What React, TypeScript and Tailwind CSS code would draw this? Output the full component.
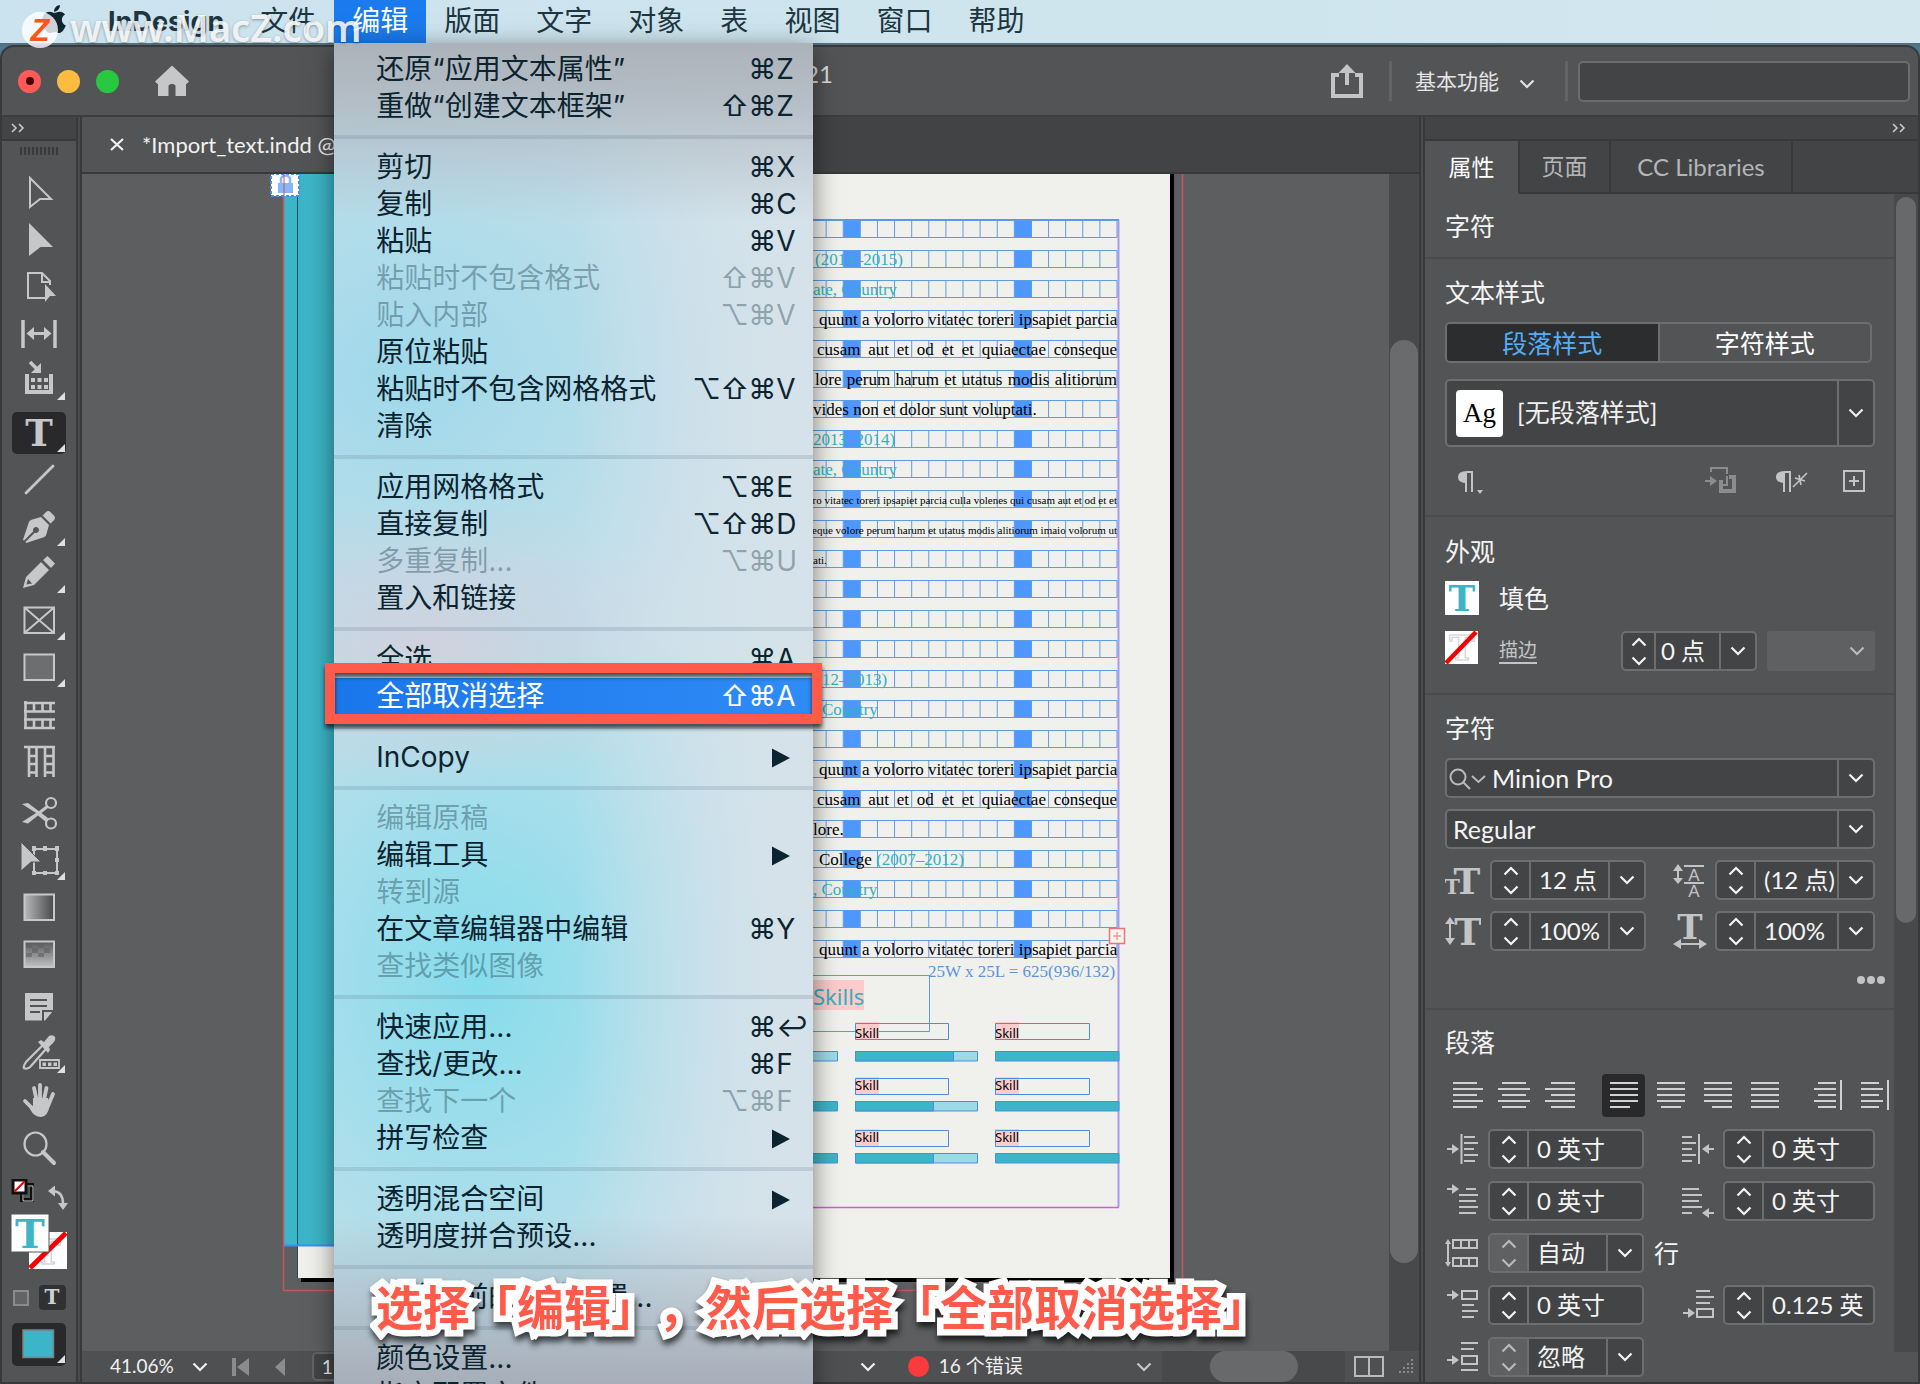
import type { ReactNode } from "react"
import { FaApple, FaPenNib } from "react-icons/fa"

type MenuEntry = {
  label: string
  keys?: string
  sub?: boolean
  disabled?: boolean
  active?: boolean
}

const menuGroups: MenuEntry[][] = [
  [
    { label: "还原“应用文本属性”", keys: "⌘Z" },
    { label: "重做“创建文本框架”", keys: "⇧⌘Z" },
  ],
  [
    { label: "剪切", keys: "⌘X" },
    { label: "复制", keys: "⌘C" },
    { label: "粘贴", keys: "⌘V" },
    { label: "粘贴时不包含格式", keys: "⇧⌘V", disabled: true },
    { label: "贴入内部", keys: "⌥⌘V", disabled: true },
    { label: "原位粘贴" },
    { label: "粘贴时不包含网格格式", keys: "⌥⇧⌘V" },
    { label: "清除" },
  ],
  [
    { label: "应用网格格式", keys: "⌥⌘E" },
    { label: "直接复制", keys: "⌥⇧⌘D" },
    { label: "多重复制...", keys: "⌥⌘U", disabled: true },
    { label: "置入和链接" },
  ],
  [
    { label: "全选", keys: "⌘A" },
    { label: "全部取消选择", keys: "⇧⌘A", active: true },
  ],
  [{ label: "InCopy", sub: true }],
  [
    { label: "编辑原稿", disabled: true },
    { label: "编辑工具", sub: true },
    { label: "转到源", disabled: true },
    { label: "在文章编辑器中编辑", keys: "⌘Y" },
    { label: "查找类似图像", disabled: true },
  ],
  [
    { label: "快速应用...", keys: "⌘↩" },
    { label: "查找/更改...", keys: "⌘F" },
    { label: "查找下一个", keys: "⌥⌘F", disabled: true },
    { label: "拼写检查", sub: true },
  ],
  [{ label: "透明混合空间", sub: true }, { label: "透明度拼合预设..." }],
  [{ label: "迁移以前的本地设置..." }],
  [{ label: "颜色设置..." }, { label: "指定配置文件..." }],
]

function MenuItem({ entry }: { entry: MenuEntry }) {
  const tone = entry.active
    ? "bg-linear-to-r from-[#1a77ea] to-[#2f8bf6] text-white"
    : entry.disabled
      ? "text-[#0b2b38]/35"
      : "text-[#0c2430]"
  return (
    <button
      disabled={entry.disabled}
      className={`relative flex h-[37px] w-full items-center justify-between pr-[16px] pl-[42px] text-left text-[28px] leading-[37px] whitespace-nowrap ${tone}`}
    >
      <span>{entry.label}</span>
      {entry.keys && (
        <span className="flex">
          {[...entry.keys].map((k, i) => (
            <span key={i} className={i === entry.keys!.length - 1 ? "w-[21px]" : "w-[28px]"}>
              {k}
            </span>
          ))}
        </span>
      )}
      {entry.sub && (
        <svg className="mr-[7px] h-[20px] w-[18px]" viewBox="0 0 18 20" fill="currentColor">
          <path d="M0 0.500L18 10L0 19.500Z" />
        </svg>
      )}
      {entry.active && (
        <span className="absolute -inset-x-[9px] -top-[15px] -bottom-[9px] z-10 border-[10px] border-[#ff5a4a] drop-shadow-[0_4px_2px_rgba(0,0,0,0.65)]" />
      )}
    </button>
  )
}

function EditMenu() {
  return (
    <div className="absolute top-full left-0 z-20 w-[479px] bg-[#c9e0ea] bg-[linear-gradient(180deg,rgba(172,178,186,1)_0%,rgba(175,183,191,0.85)_4%,rgba(180,200,212,0)_13%,rgba(180,200,212,0)_85%,rgba(166,173,184,0.9)_96%,rgba(160,166,178,1)_100%),linear-gradient(90deg,rgba(214,226,234,0)_50%,rgba(214,226,234,1)_95%),radial-gradient(ellipse_260px_150px_at_20%_44%,rgba(208,210,222,1),rgba(208,210,222,0)),radial-gradient(ellipse_340px_420px_at_30%_68%,#86dcec,rgba(150,222,236,0)),radial-gradient(ellipse_380px_330px_at_15%_24%,#9fd9ea,rgba(165,220,235,0))] py-[8px] shadow-[0_6px_24px_rgba(0,0,0,0.5)]">
      {menuGroups.map((group, i) => (
        <div key={i}>
          {i > 0 && <hr className="my-[10px] h-[4px] border-0 bg-[#5b7485]/20" />}
          {group.map((entry) => (
            <MenuItem key={entry.label} entry={entry} />
          ))}
        </div>
      ))}
    </div>
  )
}

function MenuBar() {
  return (
    <nav className="relative z-20 flex h-[45px] shrink-0 items-stretch border-b-2 border-[#55717f] bg-linear-to-r from-[#cbe3ee] to-[#d2e7ee] pl-[40px] text-[28px] leading-[43px] text-[#1d3640]">
      <button aria-label="Apple" className="mr-[40px] pb-[6px]">
        <FaApple className="h-[32px] w-[28px] text-[#10262f]" />
      </button>
      <button className="pr-[18px] text-[27px] font-bold">InDesign</button>
      <button className="px-[18px]">文件</button>
      <div className="relative">
        <button className="bg-[#1b7bee] px-[18px] text-white">编辑</button>
        <EditMenu />
      </div>
      {["版面", "文字", "对象", "表", "视图", "窗口", "帮助"].map((label) => (
        <button key={label} className="px-[18px]">
          {label}
        </button>
      ))}
    </nav>
  )
}

function Watermark() {
  return (
    <div className="pointer-events-none absolute top-[3px] left-[22px] z-30 flex items-center gap-[12px]">
      <svg className="mt-[6px] h-[36px] w-[36px]" viewBox="0 0 36 36">
        <circle cx="18" cy="18" r="18" fill="#ffffff" fillOpacity="0.8" />
        <text x="18" y="29" textAnchor="middle" fontSize="31" fontWeight="bold" fontStyle="italic" fontFamily="Liberation Sans" fill="#ff5416">
          Z
        </text>
      </svg>
      <span className="font-['Noto_Sans'] text-[38px] leading-[48px] font-semibold text-white/85 [text-shadow:0_1px_3px_rgba(0,0,0,0.35)]">
        www.MacZ.com
      </span>
    </div>
  )
}

function Chevron({ className = "" }: { className?: string }) {
  return (
    <svg className={`h-[10px] w-[16px] ${className}`} viewBox="0 0 16 10" fill="none" stroke="currentColor" strokeWidth="2.200">
      <path d="M1.500 1.500L8 8L14.500 1.500" />
    </svg>
  )
}

function DoubleChevron() {
  return (
    <svg className="h-[10px] w-[14px]" viewBox="0 0 14 10" fill="none" stroke="#c8c9ca" strokeWidth="1.600">
      <path d="M1 1L5 5L1 9M8 1L12 5L8 9" />
    </svg>
  )
}

function TitleBar() {
  return (
    <header className="flex h-[70px] shrink-0 items-center border-b-2 border-[#3c3d3f] pr-[8px] pl-[16px]">
      <div className="flex gap-[16px]">
        <button aria-label="关闭" className="flex h-[23px] w-[23px] items-center justify-center rounded-full bg-[#fc5b57]">
          <span className="h-[8px] w-[8px] rounded-full bg-[#4d0000]" />
        </button>
        <button aria-label="最小化" className="h-[23px] w-[23px] rounded-full bg-[#fdbc40]" />
        <button aria-label="缩放" className="h-[23px] w-[23px] rounded-full bg-[#28c840]" />
      </div>
      <button aria-label="主页" className="ml-[36px]">
        <svg className="h-[32px] w-[34px]" viewBox="0 0 34 32" fill="#c6c7c9">
          <path d="M17 0.500L34 16.500L31.500 19H31V31H20.500V20.500Q17 17 13.500 20.500V31H3V19H2.500L0 16.500Z" />
        </svg>
      </button>
      <span className="ml-[616px] pb-[14px] text-[24px] leading-[30px] text-[#dcdcdc]">21</span>
      <button aria-label="共享" className="ml-auto">
        <svg className="h-[36px] w-[34px]" viewBox="0 0 34 36" fill="none" stroke="#c3c4c6" strokeWidth="4">
          <path d="M9 12H3V33H31V12H25" />
          <path d="M17 22V8" />
          <path d="M8.500 10L17 1L25.500 10Z" fill="#c3c4c6" stroke="none" />
        </svg>
      </button>
      <span className="ml-[25px] h-[40px] w-[3px] bg-[#636466]" />
      <button className="flex items-center gap-[20px] pl-[23px] text-[21px] text-[#e4e4e4]">
        基本功能
        <Chevron className="mt-[6px]" />
      </button>
      <span className="ml-[30px] h-[40px] w-[3px] bg-[#636466]" />
      <input
        aria-label="搜索"
        className="ml-[10px] h-[41px] w-[332px] rounded-[5px] border-2 border-[#6b6c6e] bg-[#434446] px-2"
      />
    </header>
  )
}

const slabT = { fontFamily: "DejaVu Serif", fontWeight: "bold" } as const

type Tool = { name: string; icon: ReactNode; more?: boolean; active?: boolean }

const toolGroups: Tool[][] = [
  [
    { name: "选择", icon: <path d="M18 6L39 27H28L18 35Z" fill="none" strokeWidth="2" /> },
    { name: "直接选择", icon: <path d="M17 4L41 28H28.500L17 37Z" stroke="none" /> },
    {
      name: "页面",
      icon: (
        <>
          <path d="M33 32H16V7H30L38 15V19M30 7V16H38" fill="none" strokeWidth="2" />
          <path d="M33 18L44 30H38L33 36Z" stroke="none" />
        </>
      ),
    },
    {
      name: "间隙",
      icon: (
        <>
          <path d="M11 7V35M43 7V35" strokeWidth="3.500" />
          <path d="M18 20.500H36" strokeWidth="3" />
          <path d="M14.500 20.500L22 14V27ZM39.500 20.500L32 14V27Z" stroke="none" />
        </>
      ),
    },
    {
      name: "内容收集器",
      more: true,
      icon: (
        <>
          <path d="M15 14V32H39V14" fill="none" strokeWidth="4" />
          <path d="M18 2L25 9" strokeWidth="3.500" />
          <path d="M29 3V13H19Z" stroke="none" />
          <path d="M19 18H23V22H19ZM25.500 18H29.500V22H25.500ZM32 18H36V22H32ZM19 25H23V29H19ZM25.500 25H29.500V29H25.500ZM32 25H36V29H32Z" stroke="none" />
        </>
      ),
    },
  ],
  [
    {
      name: "文字",
      more: true,
      active: true,
      icon: (
        <text x="27" y="34" textAnchor="middle" fontSize="37" stroke="none" {...slabT}>
          T
        </text>
      ),
    },
    { name: "直线", icon: <path d="M14 34L41 7" strokeWidth="2.800" strokeLinecap="round" /> },
    { name: "钢笔", more: true, icon: <FaPenNib x="11" y="5" size="32" /> },
    {
      name: "铅笔",
      more: true,
      icon: (
        <>
          <path d="M31 7L35.500 3L43 10.500L39 15Z" stroke="none" />
          <path fillRule="evenodd" d="M29 9L37 17L22 32L11 35L14 24ZM16 26L14.500 31.500L20 30.500Z" stroke="none" />
        </>
      ),
    },
    {
      name: "矩形框架",
      more: true,
      icon: <path d="M12.500 7.500H42V33H12.500ZM12.500 7.500L42 33M42 7.500L12.500 33" fill="none" strokeWidth="2" />,
    },
    { name: "矩形", more: true, icon: <path d="M12.500 7.500H42V33H12.500Z" fill="#6d6e70" strokeWidth="2" /> },
    {
      name: "水平网格",
      icon: (
        <path d="M13.500 7V35M12 9H43M12 17.500H43M12 25.500H43M12 34H43M22 9V17M30.500 9V17M38.500 9V17M22 26V34M30.500 26V34M38.500 26V34" strokeWidth="2.600" fill="none" />
      ),
    },
    {
      name: "垂直网格",
      icon: (
        <path d="M12 6H43M17 6V36M24.500 6V36M33 6V36M41.500 6V36M17 15H24M17 23H24M17 31.500H24M33 15H41M33 23H41M33 31.500H41" strokeWidth="2.600" fill="none" />
      ),
    },
  ],
  [
    {
      name: "剪刀",
      icon: (
        <>
          <circle cx="39" cy="10" r="5" fill="none" strokeWidth="2.200" />
          <circle cx="39" cy="30.500" r="5" fill="none" strokeWidth="2.200" />
          <path d="M10 11L16 10L36 25L34 29L26 22.500L16 30.500L10 29L24 20Z" stroke="none" />
          <path d="M27 20L36 13" strokeWidth="3" />
        </>
      ),
    },
    {
      name: "自由变换",
      more: true,
      icon: (
        <>
          <path d="M22 9H45V33H22Z" fill="none" strokeWidth="2" />
          <path d="M20 6H24V11H20ZM31 6H35V11H31ZM43 6H47V11H43ZM20 31H24V35H20ZM31 31H35V35H31ZM43 31H47V35H43ZM43 18H47V22H43Z" stroke="none" />
          <path d="M9 2L29 22H19L9 31Z" stroke="#535456" strokeWidth="1" />
        </>
      ),
    },
    { name: "渐变色板", icon: <path d="M12.500 7.500H42V33H12.500Z" fill="url(#grad-h)" strokeWidth="2" /> },
    {
      name: "渐变羽化",
      icon: (
        <>
          <path d="M12.500 7.500H42V33H12.500Z" fill="url(#grad-v)" strokeWidth="2" />
          <path d="M14 9H20V14H14ZM26 9H32V14H26ZM20 14H26V19H20ZM32 14H38V19H32ZM14 19H20V23H14ZM26 19H32V23H26Z" fill="#5e5f61" fillOpacity="0.6" stroke="none" />
        </>
      ),
    },
  ],
  [
    {
      name: "附注",
      icon: (
        <>
          <path d="M13 7H41V25L33 34.500H13Z" stroke="none" />
          <path d="M18 14H35M18 20H35M18 26H28" stroke="#535456" strokeWidth="2.200" />
          <path d="M31 36V25H42" stroke="#535456" strokeWidth="2" fill="none" />
        </>
      ),
    },
    {
      name: "颜色主题",
      more: true,
      icon: (
        <>
          <path d="M31 12L14 29Q10 35 13 35.500Q17 36 19 33L34 16" fill="none" strokeWidth="2.200" />
          <path d="M26 9L29 7L32 9L37 3Q41 1 43 4Q44 7 41 10L37 14L38 17L36 20Z" stroke="none" />
          <path d="M28 27H47V35H28Z" fill="#535456" strokeWidth="1.800" />
          <path d="M30.500 29.500H34V33H30.500ZM36 29.500H39.500V33H36ZM41.500 29.500H45V33H41.500Z" stroke="none" />
        </>
      ),
    },
    {
      name: "抓手",
      icon: (
        <>
          <path d="M22 8L25 22M28 5V22M34.500 8L31.500 22M41 14L36 26M13 21L20 28" strokeWidth="3.800" strokeLinecap="round" />
          <path d="M21 18H36L38 24Q36 37 29 37Q22 37 18 29L16 25L21 26Z" stroke="none" />
        </>
      ),
    },
    {
      name: "缩放",
      icon: (
        <>
          <ellipse cx="23.500" cy="17" rx="11" ry="11.500" fill="none" strokeWidth="2.200" />
          <path d="M31 25L42 36" strokeWidth="4" strokeLinecap="round" />
        </>
      ),
    },
  ],
]

function ToolButton({ tool }: { tool: Tool }) {
  return (
    <button aria-label={tool.name} className="flex h-[47px] w-[54px] items-center justify-center">
      <svg
        className={`h-[42px] w-[54px] rounded-[5px] text-[#c6c7c9] ${tool.active ? "bg-[#29292b]" : ""}`}
        viewBox="0 0 54 42"
        fill="currentColor"
        stroke="currentColor"
      >
        {tool.icon}
        {tool.more && <path d="M53 32V40H45Z" fill="#e0e0e0" stroke="none" />}
      </svg>
    </button>
  )
}

function Toolbar() {
  return (
    <aside className="flex w-[74px] shrink-0 flex-col items-center bg-[#535456]">
      <svg className="absolute h-0 w-0">
        <defs>
          <linearGradient id="grad-h">
            <stop offset="0" stopColor="#b8b9bb" />
            <stop offset="1" stopColor="#47484a" />
          </linearGradient>
          <linearGradient id="grad-v" x2="0" y2="1">
            <stop offset="0" stopColor="#58595b" />
            <stop offset="1" stopColor="#c0c1c3" />
          </linearGradient>
        </defs>
      </svg>
      <div className="flex h-[24px] w-full shrink-0 items-center border-b-2 border-[#38393b] bg-[#434446] pl-[9px]">
        <DoubleChevron />
      </div>
      <div className="mt-[6px] mb-[14px] h-[8px] w-[38px] shrink-0 bg-[repeating-linear-gradient(90deg,#38393b_0_2px,transparent_2px_4px)]" />
      <div className="flex flex-col gap-[5px]">
        {toolGroups.map((group, i) => (
          <div key={i} className="flex flex-col">
            {group.map((tool) => (
              <ToolButton key={tool.name} tool={tool} />
            ))}
          </div>
        ))}
      </div>
      <button aria-label="填色和描边" className="mt-[8px]">
        <svg className="h-[98px] w-[58px]" viewBox="0 0 58 98">
          <path d="M12 6H22V21H12Z" fill="none" stroke="#101010" strokeWidth="4" />
          <path d="M13 7H23V22H13Z" fill="none" stroke="#c9c9c9" strokeWidth="1" />
          <path d="M3 1H16V14H3Z" fill="#fff" stroke="#101010" strokeWidth="3" />
          <path d="M4.500 12.500L14.500 2.500" stroke="#f00000" strokeWidth="2" />
          <path d="M42 12Q53 12 53 25" fill="none" stroke="#c6c7c9" strokeWidth="2.500" />
          <path d="M38 12L45 6.500V17.500ZM53 31L48 24H58Z" fill="#c6c7c9" />
          <path d="M19 53H57V90H19Z" fill="#fff" />
          <text x="38" y="85" textAnchor="middle" fontSize="34" fill="#fff" stroke="#c9c9c9" {...slabT}>
            T
          </text>
          <path d="M20 89L56 54" stroke="#f40000" strokeWidth="5" />
          <path d="M1 35H39V73H1Z" fill="#fff" stroke="#535456" />
          <text x="20" y="69" textAnchor="middle" fontSize="40" fill="#3db5c8" {...slabT}>
            T
          </text>
        </svg>
      </button>
      <div className="mt-[8px] flex items-center gap-[10px]">
        <button aria-label="格式针对容器" className="h-[16px] w-[16px] border-2 border-[#8a8b8d] bg-[#636466]" />
        <button
          aria-label="格式针对文本"
          className="h-[25px] w-[27px] rounded-[4px] bg-[#303133] font-['DejaVu_Serif'] text-[20px] leading-[25px] font-bold text-[#d0d1d3]"
        >
          T
        </button>
      </div>
      <button aria-label="应用颜色" className="mt-[13px]">
        <svg className="h-[43px] w-[54px] rounded-[5px] bg-[#29292b]" viewBox="0 0 54 43">
          <path d="M11 7H41.500V34.500H11Z" fill="#3db5c8" stroke="#7e8081" strokeWidth="1.500" />
          <path d="M53 32V40H45Z" fill="#e0e0e0" />
        </svg>
      </button>
    </aside>
  )
}

// the frame grid is 25 x 25 cells with every tenth cell filled
const gridRows = Array.from({ length: 25 }, (_, i) => 220 + i * 30)
const gridCols = Array.from({ length: 25 }, (_, i) => 1117 - (24 - i) * 17.11)

const longA = "quunt a volorro vitatec toreri ipsapiet parcia"
const longB = "cusam aut et od et et quiaectae conseque"
const justify = "[text-align-last:justify]"
const teal = "text-[#35b0bf]"

type Line = { text?: ReactNode; className?: string }

const lines: Line[] = [
  {},
  { text: "(2014–2015)", className: `pl-[2px] ${teal}` },
  { text: "ate, Country", className: teal },
  { text: longA, className: `pl-[6px] ${justify}` },
  { text: longB, className: `pl-[4px] ${justify}` },
  { text: "lore perum harum et utatus modis alitiorum", className: `pl-[2px] ${justify}` },
  { text: "vides non et dolor sunt voluptati." },
  { text: "2013–2014)", className: teal },
  { text: "ate, Country", className: teal },
  { text: "orro vitatec toreri ipsapiet parcia culla volenes qui cusam aut et od et et", className: "flex justify-end text-[11px]" },
  { text: "seque volore perum harum et utatus modis alitiorum imaio volorum ut", className: "flex justify-end text-[11px]" },
  { text: "ati.", className: "text-[11px]" },
  {},
  {},
  {},
  { text: "12–2013)", className: `pl-[9px] ${teal}` },
  { text: "Country", className: `pl-[9px] ${teal}` },
  {},
  { text: longA, className: `pl-[6px] ${justify}` },
  { text: longB, className: `pl-[4px] ${justify}` },
  { text: "lore." },
  {
    text: (
      <>
        College <span className={teal}>(2007–2012)</span>
      </>
    ),
    className: "pl-[6px]",
  },
  { text: ", Country", className: teal },
  {},
  { text: longA, className: `pl-[6px] ${justify}` },
]

const skillRows = [
  { box: 1023, bar: 1051, fill: 98 },
  { box: 1078, bar: 1101, fill: 78 },
  { box: 1130, bar: 1153, fill: 78 },
]

function Spread() {
  return (
    <div className="relative h-full min-w-0 flex-1 overflow-hidden bg-[#5d5e60]">
      <svg className="absolute top-0 left-0 h-[1177px] w-[1308px]" viewBox="82 174 1308 1177" fill="none">
        <path d="M301 174H1174V1282H301Z" fill="#000" />
        <path d="M297 174H1170V1278H297Z" fill="#f0f1ec" />
        <path d="M284 174H600V1245H284Z" fill="#3db5c8" />
        <path d="M297.500 174V1278" stroke="#20505a" />
        <path d="M284 1245.500H600" stroke="#3c8ff0" strokeWidth="2" />
        <path d="M283.500 174V1290.500H1182.500V174" stroke="#c8555a" strokeWidth="1.500" />
        <path d="M271 174H299V196H271Z" fill="#fff" stroke="#4b8df0" strokeWidth="2" strokeDasharray="3 2" />
        <path d="M278 183H293V193H278Z" fill="#86b6fb" />
        <path d="M281 183V178Q285.500 173 290 178V183" stroke="#86b6fb" strokeWidth="2.500" />
        <path d="M284 174V196" stroke="#c8555a" />

        <path d="M689 220H1119" stroke="#a86cf5" strokeWidth="2" />
        <path d="M1118.500 220V1207" stroke="#a99af0" strokeWidth="2" />
        <path d="M689 1207.500H1119" stroke="#d45ae0" strokeWidth="1.500" />
        {gridRows.map((y) => (
          <g key={y} stroke="#5f9be3">
            {gridCols.map((x, i) => (
              <path key={i} d={`M${x} ${y + 0.5}V${y + 17.5}`} />
            ))}
            <path d={`M689 ${y + 0.5}H1117M689 ${y + 17.5}H1117`} />
            <path d={`M843.500 ${y + 1}H860V${y + 17}H843.500ZM1014.500 ${y + 1}H1031.500V${y + 17}H1014.500Z`} fill="#4d97ff" stroke="none" />
          </g>
        ))}
        <path d="M1109.500 928.500H1124.500V943.500H1109.500Z" fill="#f6f3ee" stroke="#e8747c" strokeWidth="1.500" />
        <path d="M1117 932V940M1113 936H1121" stroke="#e8747c" />

        <path d="M813 980H864V1010H813Z" fill="#fbcccb" />
        <path d="M700 975.500H929.500V1031.500H700" stroke="#5f9be3" />
        {skillRows.map((r, i) => (
          <g key={r.box} stroke="#4b8fdc">
            <path d={`M855 ${r.box - 1}H879V${r.box + 17}H855ZM995 ${r.box - 1}H1019V${r.box + 17}H995Z`} fill="#fbcccb" stroke="none" />
            <path d={`M855.500 ${r.box + 0.5}H948.500V${r.box + 16.5}H855.500ZM995.500 ${r.box + 0.5}H1089.500V${r.box + 16.5}H995.500Z`} />
            <path d={`M700 ${r.bar + 0.5}H837.500V${r.bar + 10}H700Z`} fill={i === 0 ? "#9cdbe6" : "#3db5c8"} />
            <path d={`M855.500 ${r.bar + 0.5}H977.500V${r.bar + 10}H855.500Z`} fill="#9cdbe6" />
            <path d={`M855.500 ${r.bar + 0.5}H${855.5 + r.fill}V${r.bar + 10}H855.500Z`} fill="#3db5c8" />
            <path d={`M995.500 ${r.bar + 0.5}H1119V${r.bar + 10}H995.500Z`} fill="#3db5c8" />
          </g>
        ))}
      </svg>
      <div className="absolute top-[46px] left-[731px] w-[304px] font-['Liberation_Serif'] text-[17px] leading-[20px] whitespace-nowrap text-black">
        {lines.map((line, i) => (
          <p key={i} className={`h-[30px] leading-[20px] ${line.className ?? ""}`}>
            {line.text}
          </p>
        ))}
      </div>
      <p className="absolute top-[786px] left-[846px] font-['Liberation_Serif'] text-[17px] leading-[24px] whitespace-nowrap text-[#5b93dc]">
        25W x 25L = 625(936/132)
      </p>
      <p className="absolute top-[807px] left-[731px] font-['Noto_Sans'] text-[22px] leading-[30px] text-[#35b0bf]">Skills</p>
      {["top-[850px]", "top-[902px]", "top-[954px]"].map((top) => (
        <div key={top} className={`absolute left-[773px] flex font-['Noto_Sans'] text-[13px] leading-[18px] text-black ${top}`}>
          <span className="w-[140px]">Skill</span>
          <span>Skill</span>
        </div>
      ))}
    </div>
  )
}

function StatusBar() {
  return (
    <footer className="flex h-[31px] shrink-0 items-center bg-[#4f5052] text-[19px] text-[#f0f0f0]">
      <button className="flex items-center gap-[18px] pl-[28px]">
        41.06%
        <Chevron />
      </button>
      <button aria-label="第一页" className="ml-[24px]">
        <svg className="h-[20px] w-[18px]" viewBox="0 0 18 20" fill="#8b8c8e">
          <path d="M0 1H4V19H0ZM17 1V19L5 10Z" />
        </svg>
      </button>
      <button aria-label="上一页" className="ml-[25px]">
        <svg className="h-[20px] w-[10px]" viewBox="0 0 10 20" fill="#8b8c8e">
          <path d="M10 1V19L0 10Z" />
        </svg>
      </button>
      <input
        aria-label="页码"
        defaultValue="1"
        className="ml-[27px] h-[29px] w-[80px] rounded-[5px] border-2 border-[#636466] bg-[#434446] pl-[8px]"
      />
      <button aria-label="印前检查" className="ml-[468px]">
        <Chevron />
      </button>
      <button className="ml-[32px] flex items-center gap-[10px] whitespace-nowrap">
        <span className="h-[21px] w-[21px] rounded-full bg-[#fb3b3b]" />
        16 个错误
      </button>
      <Chevron className="ml-auto text-[#c8c8c8]" />
      <div className="ml-[10px] h-full w-[183px] bg-[#48494b] pl-[48px]">
        <div className="h-full w-[88px] rounded-full bg-[#68696b]" />
      </div>
      <button aria-label="拆分版面视图" className="ml-[9px]">
        <svg className="h-[21px] w-[30px]" viewBox="0 0 30 21" fill="none" stroke="#b9babc" strokeWidth="2">
          <path d="M1 1H29V20H1ZM15 1V20" />
        </svg>
      </button>
      <svg className="mr-[5px] ml-[12px] h-[18px] w-[18px]" viewBox="0 0 18 18" stroke="#8b8c8e" strokeWidth="2" strokeDasharray="2 2">
        <path d="M16 1V17M12 5V17M8 9V17M4 13V17" />
      </svg>
    </footer>
  )
}

function DocumentArea() {
  return (
    <main className="flex min-w-0 flex-1 flex-col">
      <div className="flex h-[57px] shrink-0 border-b-2 border-[#38393b] bg-[#424345]">
        <div className="flex w-[600px] items-center gap-[18px] bg-[#535456] pl-[28px] text-[22px] text-[#f2f2f2]">
          <button aria-label="关闭文档">
            <svg className="h-[13px] w-[14px]" viewBox="0 0 14 13" stroke="#f0f0f0" strokeWidth="2.200">
              <path d="M1 1L13 12M13 1L1 12" />
            </svg>
          </button>
          <span>*Import_text.indd @</span>
        </div>
      </div>
      <div className="flex min-h-0 flex-1">
        <Spread />
        <div className="w-[30px] shrink-0 bg-[#48494b] px-[1px] pt-[166px]">
          <div className="h-[923px] rounded-full bg-[#6a6b6d]" />
        </div>
      </div>
      <StatusBar />
    </main>
  )
}

type FieldProps = {
  label: string
  value: string
  width: string
  arrow?: boolean
  narrow?: boolean
  lockedSteps?: boolean
}

function Field({ label, value, width, arrow, narrow, lockedSteps }: FieldProps) {
  return (
    <div className={`flex h-[40px] shrink-0 rounded-[5px] border-2 border-[#6d6e70] bg-[#434446] text-[#f4f4f4] ${width}`}>
      <div
        className={`flex shrink-0 flex-col items-center justify-center gap-[9px] border-r-2 border-[#6d6e70] ${narrow ? "w-[33px]" : "w-[39px]"} ${lockedSteps ? "bg-[#5f6062] text-[#b9babc]" : ""}`}
      >
        <button aria-label={`${label}增加`}>
          <Chevron className="block h-[9px] rotate-180" />
        </button>
        <button aria-label={`${label}减少`}>
          <Chevron className="block h-[9px]" />
        </button>
      </div>
      <input
        aria-label={label}
        defaultValue={value}
        className={`min-w-0 flex-1 bg-transparent text-[24px] leading-[36px] ${narrow ? "pl-[5px]" : "pl-[8px]"}`}
      />
      {arrow && (
        <button aria-label={`${label}选项`} className="flex w-[36px] shrink-0 items-center justify-center border-l-2 border-[#6d6e70]">
          <Chevron />
        </button>
      )}
    </div>
  )
}

function Icon({ className = "", children }: { className?: string; children: ReactNode }) {
  return (
    <svg className={`h-[36px] w-[36px] shrink-0 ${className}`} viewBox="0 0 36 36" fill="none" stroke="#c3c4c6" strokeWidth="2">
      {children}
    </svg>
  )
}

const arrowRight = (x: number, y: number) => (
  <>
    <path d={`M${x} ${y}H${x + 6}`} />
    <path d={`M${x + 5} ${y - 5}L${x + 12} ${y}L${x + 5} ${y + 5}Z`} fill="#c3c4c6" stroke="none" />
  </>
)

const arrowLeft = (x: number, y: number) => (
  <>
    <path d={`M${x} ${y}H${x - 6}`} />
    <path d={`M${x - 5} ${y - 5}L${x - 12} ${y}L${x - 5} ${y + 5}Z`} fill="#c3c4c6" stroke="none" />
  </>
)

const alignGroups = [
  [
    { name: "左对齐", d: "M8 11H32M8 17H38M8 23H32M8 29H38M8 35H32" },
    { name: "居中对齐", d: "M10 11H34M6 17H38M10 23H34M6 29H38M10 35H34" },
    { name: "右对齐", d: "M12 11H36M6 17H36M12 23H36M6 29H36M12 35H36" },
  ],
  [
    { name: "双齐末行齐左", d: "M8 11H36M8 17H36M8 23H36M8 29H36M8 35H28", active: true },
    { name: "双齐末行居中", d: "M8 11H36M8 17H36M8 23H36M8 29H36M12 35H32" },
    { name: "双齐末行齐右", d: "M8 11H36M8 17H36M8 23H36M8 29H36M16 35H36" },
    { name: "全部强制双齐", d: "M8 11H36M8 17H36M8 23H36M8 29H36M8 35H36" },
  ],
  [
    { name: "朝向书脊对齐", d: "M12 11H30M8 17H30M12 23H30M8 29H30M12 35H30M35 8V38" },
    { name: "背向书脊对齐", d: "M8 11H26M8 17H30M8 23H26M8 29H30M8 35H26M35 8V38" },
  ],
]

function SectionTitle({ children }: { children: ReactNode }) {
  return <h2 className="text-[25px] leading-[30px] text-[#f4f4f4]">{children}</h2>
}

function Section({ className = "", children }: { className?: string; children: ReactNode }) {
  return <section className={`border-b-2 border-[#4a4b4d] pr-[19px] pl-[20px] ${className}`}>{children}</section>
}

function FontSelect({ label, value, search }: { label: string; value: string; search?: boolean }) {
  return (
    <div className="relative flex h-[40px] rounded-[5px] border-2 border-[#6d6e70] bg-[#434446]">
      <select
        aria-label={label}
        className={`w-full appearance-none bg-transparent text-[25px] leading-[34px] text-[#f4f4f4] ${search ? "pl-[45px]" : "pl-[6px]"}`}
      >
        <option>{value}</option>
      </select>
      {search && (
        <svg className="pointer-events-none absolute top-[8px] left-[2px] h-[22px] w-[38px]" viewBox="0 0 38 22" fill="none" stroke="#b9babc" strokeWidth="2">
          <circle cx="9" cy="9" r="7.500" />
          <path d="M14.500 14.500L21 21M23 8L29.500 14L36 8" />
        </svg>
      )}
      <span className="pointer-events-none absolute inset-y-0 right-0 flex w-[36px] items-center justify-center border-l-2 border-[#6d6e70] text-[#f4f4f4]">
        <Chevron />
      </span>
    </div>
  )
}

function CharacterRow({ left, right }: { left: ReactNode; right: ReactNode }) {
  return (
    <div className="flex items-center">
      <div className="flex w-[201px] shrink-0 items-center gap-[9px]">{left}</div>
      <div className="ml-auto flex items-center gap-[6px]">{right}</div>
    </div>
  )
}

function PropertiesPanel() {
  return (
    <aside className="flex w-[493px] shrink-0 flex-col bg-[#535456]">
      <div className="flex h-[24px] shrink-0 items-center justify-end border-b-2 border-[#38393b] bg-[#434446] pr-[12px]">
        <DoubleChevron />
      </div>
      <div className="flex h-[53px] shrink-0 bg-[#434446] text-[23px]">
        <button className="w-[93px] bg-[#535456] text-white">属性</button>
        <button className="w-[93px] border-x-2 border-b-2 border-[#38393b] text-[#b4b5b7]">页面</button>
        <button className="w-[182px] border-r-2 border-b-2 border-[#38393b] text-[24px] text-[#b4b5b7]">CC Libraries</button>
        <span className="flex-1 border-b-2 border-[#38393b]" />
      </div>
      <div className="flex min-h-0 flex-1">
        <div className="min-w-0 flex-1 overflow-hidden">
          <Section className="pt-[17px] pb-[16px]">
            <SectionTitle>字符</SectionTitle>
          </Section>
          <Section className="pt-[18px]">
            <SectionTitle>文本样式</SectionTitle>
            <div className="mt-[15px] mr-[3px] flex h-[41px] overflow-hidden rounded-[5px] border-2 border-[#6d6e70] text-[25px] leading-[34px]">
              <button className="flex-1 bg-[#2c2d2f] text-[#55aef5]">段落样式</button>
              <button className="flex-1 border-l-2 border-[#6d6e70] text-white">字符样式</button>
            </div>
            <div className="mt-[16px] flex h-[68px] items-center rounded-[5px] border-2 border-[#6d6e70] bg-[#434446] pl-[9px] text-[25px] text-[#f0f0f0]">
              <span className="h-[47px] w-[47px] rounded-[4px] bg-white text-center font-['Liberation_Serif'] text-[27px] leading-[47px] text-black">
                Ag
              </span>
              <span className="ml-[14px]">[无段落样式]</span>
              <button aria-label="段落样式列表" className="ml-auto flex h-full w-[36px] items-center justify-center border-l-2 border-[#6d6e70]">
                <Chevron />
              </button>
            </div>
            <div className="flex h-[68px] items-center pr-[10px] pl-[10px]">
              <button aria-label="段落样式选项">
                <Icon>
                  <path d="M12 9H18M11 29V9M17 29V9" />
                  <path d="M12 8Q3 8 3 14Q3 20 12 20Z" fill="#c3c4c6" stroke="none" />
                  <path d="M22 27H28L25 31Z" fill="#c3c4c6" stroke="none" />
                </Icon>
              </button>
              <button aria-label="重新定义样式" className="ml-auto">
                <Icon className="opacity-50">
                  <path d="M8 9V5H24V11M16 22H24" />
                  <path d="M18 17V28H31V14H26" strokeWidth="4" />
                  <path d="M24 13V22H16" />
                  {arrowRight(2, 18)}
                </Icon>
              </button>
              <button aria-label="清除优先选项" className="ml-[34px]">
                <Icon>
                  <path d="M12 9H18M11 29V9M17 29V9" />
                  <path d="M12 8Q3 8 3 14Q3 20 12 20Z" fill="#c3c4c6" stroke="none" />
                  <path d="M20 24L34 10M22 15L32 18M26 12L28 22" strokeWidth="1.600" />
                </Icon>
              </button>
              <button aria-label="创建新样式" className="ml-[34px]">
                <svg className="h-[22px] w-[22px]" viewBox="0 0 22 22" fill="none" stroke="#c3c4c6" strokeWidth="2">
                  <path d="M1 1H21V21H1ZM11 6V16M6 11H16" />
                </svg>
              </button>
            </div>
          </Section>
          <Section className="pt-[19px] pb-[22px]">
            <SectionTitle>外观</SectionTitle>
            <button className="mt-[15px] flex items-center gap-[20px] text-[25px] leading-[34px] text-[#f4f4f4]">
              <svg className="h-[34px] w-[34px] overflow-visible" viewBox="0 0 34 34">
                <path d="M0 0H34V34H0Z" fill="#fff" />
                <text x="17" y="30" textAnchor="middle" fontSize="36" fill="#3db5c8" {...slabT}>
                  T
                </text>
              </svg>
              填色
            </button>
            <div className="mt-[16px] flex h-[40px] items-center">
              <svg className="mb-[6px] h-[34px] w-[34px] overflow-visible" viewBox="0 0 34 34">
                <path d="M0 0H33V33H0Z" fill="#fff" />
                <text x="17" y="29" textAnchor="middle" fontSize="34" fill="#fff" stroke="#cfcfcf" {...slabT}>
                  T
                </text>
                <path d="M1 32L31 1" stroke="#f40000" strokeWidth="4.500" />
              </svg>
              <button className="ml-[20px] border-b-2 border-[#c3c4c6] text-[19px] leading-[24px] text-[#c3c4c6]">描边</button>
              <div className="ml-auto flex gap-[10px]">
                <Field label="描边粗细" value="0 点" width="w-[136px]" narrow arrow />
                <div className="relative h-[40px] w-[108px]">
                  <select aria-label="描边类型" disabled className="h-full w-full appearance-none rounded-[3px] bg-[#5f6062]" />
                  <Chevron className="absolute top-[15px] right-[10px] text-[#b9babc]" />
                </div>
              </div>
            </div>
          </Section>
          <Section className="pt-[18px]">
            <SectionTitle>字符</SectionTitle>
            <div className="mt-[15px] flex flex-col gap-[11px]">
              <FontSelect label="字体" value="Minion Pro" search />
              <FontSelect label="字体样式" value="Regular" />
              <CharacterRow
                left={
                  <>
                    <Icon>
                      <g fill="#c3c4c6" stroke="none" {...slabT}>
                        <text x="22" y="32" textAnchor="middle" fontSize="36">T</text>
                        <text x="7" y="32" textAnchor="middle" fontSize="21">T</text>
                      </g>
                    </Icon>
                    <Field label="字号" value="12 点" width="w-[156px]" arrow />
                  </>
                }
                right={
                  <>
                    <Icon>
                      <path d="M5 6V18M11 4H31M11 21H31" />
                      <path d="M0 9L5 2L10 9ZM0 16L5 22L10 16Z" fill="#c3c4c6" stroke="none" />
                      <g fill="#c3c4c6" stroke="none" fontFamily="Liberation Sans" fontSize="17">
                        <text x="21" y="19" textAnchor="middle">A</text>
                        <text x="21" y="35" textAnchor="middle">A</text>
                      </g>
                    </Icon>
                    <Field label="行距" value="(12 点)" width="w-[160px]" arrow />
                  </>
                }
              />
              <CharacterRow
                left={
                  <>
                    <Icon>
                      <path d="M5 8V28" />
                      <path d="M0 11L5 4L10 11ZM0 25L5 32L10 25Z" fill="#c3c4c6" stroke="none" />
                      <text x="23" y="32" textAnchor="middle" fontSize="37" fill="#c3c4c6" stroke="none" {...slabT}>T</text>
                    </Icon>
                    <Field label="垂直缩放" value="100%" width="w-[156px]" arrow />
                  </>
                }
                right={
                  <>
                    <Icon>
                      <path d="M5 31H29" />
                      <path d="M8 26L0 31L8 36ZM26 26L34 31L26 36Z" fill="#c3c4c6" stroke="none" />
                      <text x="17" y="26" textAnchor="middle" fontSize="34" fill="#c3c4c6" stroke="none" {...slabT}>T</text>
                    </Icon>
                    <Field label="水平缩放" value="100%" width="w-[160px]" arrow />
                  </>
                }
              />
            </div>
            <div className="-mr-[10px] flex h-[57px] items-center justify-end">
              <button aria-label="更多选项" className="flex gap-[2px]">
                <span className="h-[8px] w-[8px] rounded-full bg-[#c3c4c6]" />
                <span className="h-[8px] w-[8px] rounded-full bg-[#c3c4c6]" />
                <span className="h-[8px] w-[8px] rounded-full bg-[#c3c4c6]" />
              </button>
            </div>
          </Section>
          <section className="pt-[17px] pr-[19px] pl-[20px]">
            <SectionTitle>段落</SectionTitle>
            <div className="mt-[17px] flex gap-[20px]">
              {alignGroups.map((group, i) => (
                <div key={i} className="flex shrink-0 gap-[4px]">
                  {group.map((b) => (
                    <button key={b.name} aria-label={b.name}>
                      <svg
                        className={`h-[43px] w-[43px] rounded-[4px] ${"active" in b ? "bg-[#29292b]" : ""}`}
                        viewBox="0 2 43 43"
                        stroke="#d0d1d3"
                        strokeWidth="2"
                      >
                        <path d={b.d} />
                      </svg>
                    </button>
                  ))}
                </div>
              ))}
            </div>
            <div className="mt-[12px] flex flex-col gap-[12px]">
              <div className="flex items-center">
                <Icon className="mr-[7px]">
                  {arrowRight(2, 18)}
                  <path d="M16.500 3V33M19 6H30M19 12H33M19 18H29M19 24H33M19 30H30" />
                </Icon>
                <Field label="左缩进" value="0 英寸" width="w-[156px]" />
                <Icon className="mr-[6px] ml-auto">
                  <path d="M1 6H11M1 12H15M1 18H11M1 24H15M1 30H11M18 3V33" />
                  {arrowLeft(33, 18)}
                </Icon>
                <Field label="右缩进" value="0 英寸" width="w-[152px]" />
              </div>
              <div className="flex items-center">
                <Icon className="mr-[7px]">
                  {arrowRight(2, 6)}
                  <path d="M21 6H31M14 12H33M14 18H31M14 24H33M14 30H31" />
                </Icon>
                <Field label="首行左缩进" value="0 英寸" width="w-[156px]" />
                <Icon className="mr-[6px] ml-auto">
                  <path d="M1 6H18M1 12H21M1 18H18M1 24H21M1 30H11" />
                  {arrowLeft(33, 30)}
                </Icon>
                <Field label="末行右缩进" value="0 英寸" width="w-[152px]" />
              </div>
              <div className="flex items-center">
                <Icon className="mr-[7px]">
                  <path d="M3 6V30M8 5H32V13H8ZM8 23H32V31H8ZM16 5V13M24 5V13M16 23V31M24 23V31" />
                  <path d="M0 9L3 4L6 9ZM0 27L3 32L6 27Z" fill="#c3c4c6" stroke="none" />
                </Icon>
                <Field label="强制行数" value="自动" width="w-[156px]" arrow lockedSteps />
                <span className="ml-[10px] text-[25px] leading-[40px] text-[#f4f4f4]">行</span>
              </div>
              <div className="flex items-center">
                <Icon className="mr-[7px]">
                  {arrowRight(2, 8)}
                  <path d="M17 4H32V12H17ZM17 18H29M17 24H33M17 30H29" />
                </Icon>
                <Field label="段前间距" value="0 英寸" width="w-[156px]" />
                <Icon className="mr-[6px] ml-auto">
                  <path d="M15 4H29M15 10H33M15 16H29M16 22H32V30H16Z" />
                  {arrowRight(2, 26)}
                </Icon>
                <Field label="段后间距" value="0.125 英" width="w-[152px]" />
              </div>
              <div className="flex items-center">
                <Icon className="mr-[7px]">
                  <path d="M16 4H33M16 10H29M17 17H32V25H17ZM16 31H33" />
                  {arrowRight(2, 21)}
                </Icon>
                <Field label="段落间距" value="忽略" width="w-[156px]" arrow lockedSteps />
              </div>
            </div>
          </section>
        </div>
        <div className="mb-[30px] w-[24px] shrink-0 bg-[#48494b] px-[2px] pt-[3px]">
          <div className="h-[726px] rounded-full bg-[#68696b]" />
        </div>
      </div>
    </aside>
  )
}

export default function App() {
  return (
    <div className="relative flex h-screen flex-col overflow-hidden bg-[#4b7790] font-[Inter,'Noto_Sans_CJK_SC',sans-serif]">
      <MenuBar />
      <div className="flex min-h-0 flex-1 flex-col overflow-hidden rounded-t-[14px] border-2 border-[#38393b] bg-[#535456] font-[Lato,'Noto_Sans_CJK_SC',sans-serif]">
        <TitleBar />
        <div className="flex min-h-0 flex-1">
          <Toolbar />
          <div className="w-[6px] shrink-0 border-x-2 border-[#38393b] bg-[#4a4b4d]" />
          <DocumentArea />
          <div className="w-[6px] shrink-0 border-x-2 border-[#38393b] bg-[#4a4b4d]" />
          <PropertiesPanel />
        </div>
      </div>
      <Watermark />
      <p className="pointer-events-none absolute top-[1273px] left-[376px] z-30 text-[47px] leading-[70px] font-bold whitespace-nowrap text-[#ff5a4a] drop-shadow-[1px_5px_3px_rgba(0,0,0,0.7)] [-webkit-text-stroke:13px_white] [paint-order:stroke_fill] [text-spacing-trim:space-all]">
        选择「编辑」，然后选择「全部取消选择」
      </p>
    </div>
  )
}
